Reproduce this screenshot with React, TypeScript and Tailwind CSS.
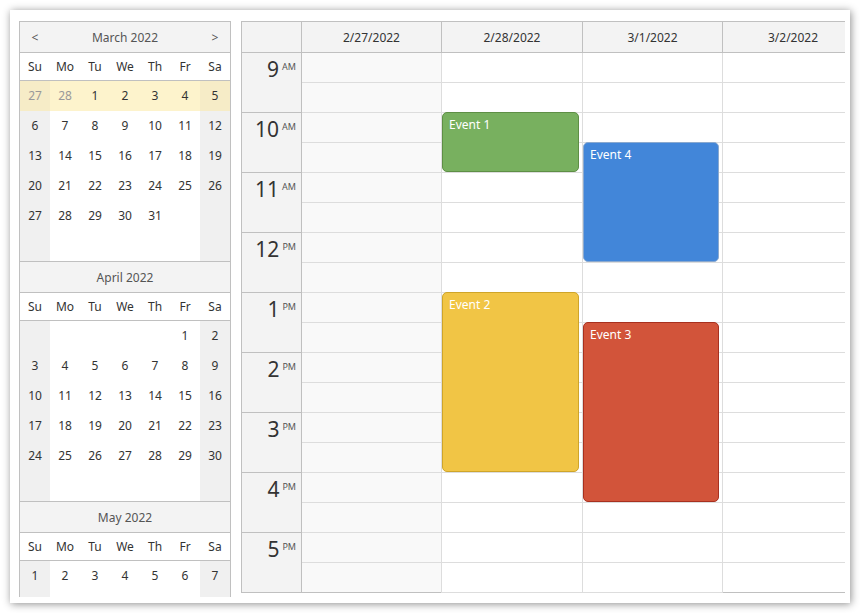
import React from "react";

type Cell = { d: number | null; other?: boolean };

const DAYS = ["Su", "Mo", "Tu", "We", "Th", "Fr", "Sa"];

function mk(arr: (number | null)[], otherIdx: number[] = []): Cell[] {
  return arr.map((d, i) => ({ d, other: otherIdx.includes(i) }));
}

const EMPTY = mk([null, null, null, null, null, null, null]);

const march: Cell[][] = [
  mk([27, 28, 1, 2, 3, 4, 5], [0, 1]),
  mk([6, 7, 8, 9, 10, 11, 12]),
  mk([13, 14, 15, 16, 17, 18, 19]),
  mk([20, 21, 22, 23, 24, 25, 26]),
  mk([27, 28, 29, 30, 31, null, null]),
  EMPTY,
];
const april: Cell[][] = [
  mk([null, null, null, null, null, 1, 2]),
  mk([3, 4, 5, 6, 7, 8, 9]),
  mk([10, 11, 12, 13, 14, 15, 16]),
  mk([17, 18, 19, 20, 21, 22, 23]),
  mk([24, 25, 26, 27, 28, 29, 30]),
  EMPTY,
];
const may: Cell[][] = [mk([1, 2, 3, 4, 5, 6, 7]), EMPTY];

function cellBg(col: number, hl: boolean) {
  const weekend = col === 0 || col === 6;
  if (hl) return weekend ? "bg-[#f6ecc7]" : "bg-[#fdf3cc]";
  return weekend ? "bg-[#f0f0f0]" : "bg-white";
}

function Month({ title, weeks, nav, hlRow }: { title: string; weeks: Cell[][]; nav?: boolean; hlRow?: number }) {
  return (
    <div>
      <div className="h-[31px] border-t border-[#c0c0c0] bg-[#f3f3f3] flex items-center pt-[1px] text-[12px] text-[#555]">
        <span className="w-[30px] text-center">{nav ? "<" : ""}</span>
        <span className="flex-1 text-center">{title}</span>
        <span className="w-[30px] text-center">{nav ? ">" : ""}</span>
      </div>
      <div className="h-[28px] border-t border-[#c0c0c0] bg-white grid grid-cols-7 text-[12px] text-[#333]">
        {DAYS.map((d) => (
          <div key={d} className="flex items-center justify-center">
            {d}
          </div>
        ))}
      </div>
      <div className="border-t border-[#c0c0c0]">
        {weeks.map((w, ri) => (
          <div key={ri} className="h-[30px] grid grid-cols-7 text-[12px]">
            {w.map((c, ci) => (
              <div
                key={ci}
                className={`flex items-center justify-center ${cellBg(ci, ri === hlRow)} ${c.other ? "text-[#999]" : "text-[#333]"}`}
              >
                {c.d ?? ""}
              </div>
            ))}
          </div>
        ))}
      </div>
    </div>
  );
}

const HOURS: [string, string][] = [
  ["9", "AM"],
  ["10", "AM"],
  ["11", "AM"],
  ["12", "PM"],
  ["1", "PM"],
  ["2", "PM"],
  ["3", "PM"],
  ["4", "PM"],
  ["5", "PM"],
];

type Ev = { name: string; top: number; height: number; width: number; cls: string };

const COLS: { label: string; w: string; bg: string; events: Ev[] }[] = [
  { label: "2/27/2022", w: "w-[140px]", bg: "bg-[#f9f9f9]", events: [] },
  {
    label: "2/28/2022",
    w: "w-[141px]",
    bg: "bg-white",
    events: [
      { name: "Event 1", top: 59, height: 60, width: 137, cls: "bg-[#78b05f] border-[#5e8f45]" },
      { name: "Event 2", top: 239, height: 180, width: 137, cls: "bg-[#f1c545] border-[#cfa529]" },
    ],
  },
  {
    label: "3/1/2022",
    w: "w-[140px]",
    bg: "bg-white",
    events: [
      { name: "Event 4", top: 89, height: 120, width: 136, cls: "bg-[#4286d9] border-[#8aa9cf]" },
      { name: "Event 3", top: 269, height: 180, width: 136, cls: "bg-[#d2543a] border-[#a8301f]" },
    ],
  },
  { label: "3/2/2022", w: "w-[141px]", bg: "bg-white", events: [] },
];

export default function App() {
  return (
    <div className="w-[860px] h-[613px] bg-white pt-[10px] pl-[10px] font-['Noto_Sans','Open_Sans',sans-serif] overflow-hidden">
      <div className="w-[840px] h-[593px] bg-white shadow-[1px_1px_8px_rgba(0,0,0,0.45)] flex items-start pt-[11px] pl-[9px] gap-[10px]">
        {/* Navigator */}
        <div className="w-[212px] h-[576px] border-x border-[#c0c0c0] overflow-hidden shrink-0">
          <Month title="March 2022" weeks={march} nav hlRow={0} />
          <Month title="April 2022" weeks={april} />
          <Month title="May 2022" weeks={may} />
        </div>

        {/* Scheduler */}
        <div className="w-[604px] h-[572px] border-l border-t border-[#c0c0c0] overflow-hidden shrink-0 flex flex-col">
          <div className="h-[31px] border-b border-[#c0c0c0] bg-[#f3f3f3] flex shrink-0 text-[12px] text-[#333]">
            <div className="w-[60px] border-r border-[#c0c0c0] shrink-0" />
            {COLS.map((c) => (
              <div key={c.label} className={`${c.w} shrink-0 border-r border-[#c0c0c0] flex items-center justify-center pt-[1px]`}>
                {c.label}
              </div>
            ))}
          </div>
          <div className="flex">
            <div className="w-[60px] shrink-0 border-r border-[#c0c0c0] bg-[#f3f3f3]">
              {HOURS.map(([h, s]) => (
                <div key={h + s} className="h-[60px] border-b border-[#c0c0c0] flex justify-end items-start pr-[5px] pt-[6px]">
                  <span className="text-[21px] leading-none text-[#333]">{h}</span>
                  <span className="text-[9px] leading-none text-[#555] ml-[3px] mt-[3px]">{s}</span>
                </div>
              ))}
            </div>
            {COLS.map((c) => (
              <div key={c.label} className={`${c.w} shrink-0 border-r border-[#dddddd] ${c.bg} relative`}>
                {Array.from({ length: 18 }).map((_, i) => (
                  <div key={i} className="h-[30px] border-b border-[#dddddd] last:border-[#c0c0c0]" />
                ))}
                {c.events.map((e) => (
                  <div
                    key={e.name}
                    className={`absolute left-0 border rounded-[5px] ${e.cls} text-white text-[12px] leading-none pl-[6px] pt-[6px]`}
                    style={{ top: e.top, height: e.height, width: e.width }}
                  >
                    {e.name}
                  </div>
                ))}
              </div>
            ))}
          </div>
        </div>
      </div>
    </div>
  );
}
